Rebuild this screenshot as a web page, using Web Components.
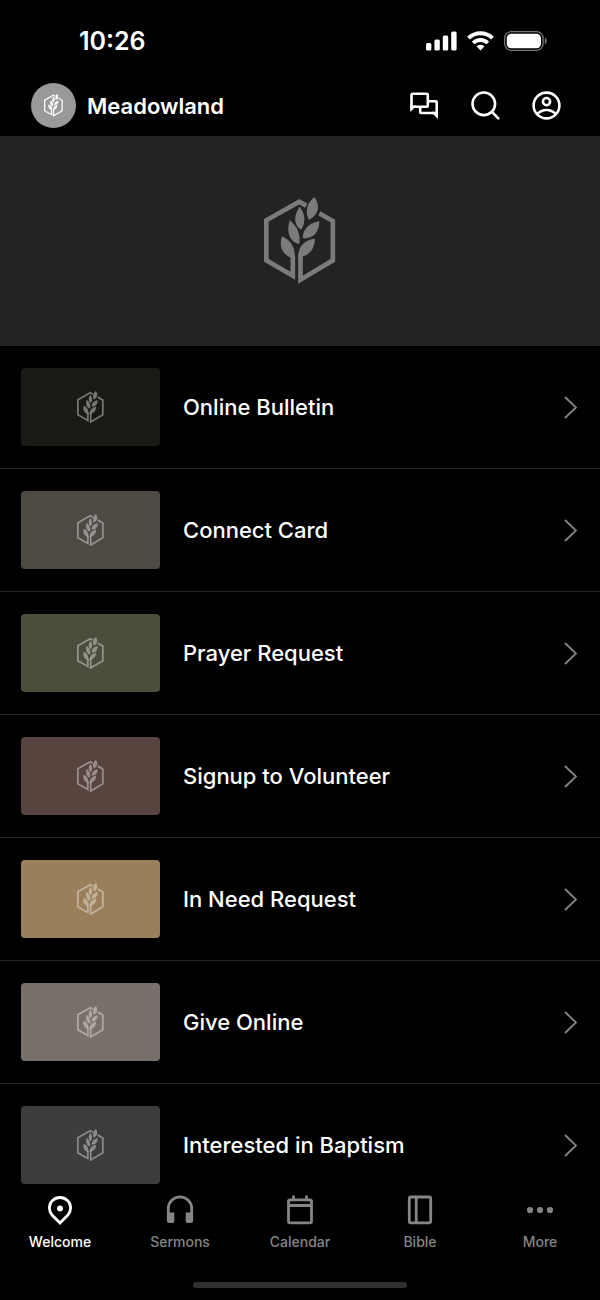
<!DOCTYPE html>
<html lang="en">
<head>
<meta charset="utf-8">
<meta name="viewport" content="width=device-width, initial-scale=1">
<title>Meadowland</title>
<style>
    body {
        margin: 0;
        background: #000;
        color: #fff;
        font-family: Inter, "Liberation Sans", sans-serif;
    }
</style>
</head>
<body>
<church-app>
    <status-bar slot="top" time="10:26"></status-bar>
    <app-header slot="top">Meadowland</app-header>
    <hero-banner></hero-banner>
    <link-row href="#bulletin" color="#191a15">Online Bulletin</link-row>
    <link-row href="#connect" color="#4d4a43">Connect Card</link-row>
    <link-row href="#prayer" color="#4c4d3d">Prayer Request</link-row>
    <link-row href="#volunteer" color="#58433f">Signup to Volunteer</link-row>
    <link-row href="#need" color="#9a7f5b">In Need Request</link-row>
    <link-row href="#give" color="#79706a">Give Online</link-row>
    <link-row href="#baptism" color="#3f3c3e">Interested in Baptism</link-row>
    <tab-bar slot="bottom">
        <tab-item href="#welcome" icon="pin" active>Welcome</tab-item>
        <tab-item href="#sermons" icon="headphones">Sermons</tab-item>
        <tab-item href="#calendar" icon="calendar">Calendar</tab-item>
        <tab-item href="#bible" icon="book">Bible</tab-item>
        <tab-item href="#more" icon="dots">More</tab-item>
    </tab-bar>
</church-app>

<script>
class ChurchApp extends HTMLElement {
    connectedCallback() {
        this.attachShadow({ mode: 'open' });
        this.shadowRoot.innerHTML = `
            <style>
                :host {
                    display: flex;
                    flex-direction: column;
                    height: 100vh;
                }
                main {
                    flex: 1;
                    min-height: 0;
                    overflow-y: auto;
                    scrollbar-width: none;
                }
            </style>
            <slot name="top"></slot>
            <main><slot></slot></main>
            <slot name="bottom"></slot>
        `;
    }
}
customElements.define('church-app', ChurchApp);

class StatusBar extends HTMLElement {
    connectedCallback() {
        this.attachShadow({ mode: 'open' });
        this.shadowRoot.innerHTML = `
            <style>
                :host {
                    display: flex;
                    justify-content: space-between;
                    align-items: center;
                    padding: 24px 53px 8px 79px;
                }
                .time {
                    font-size: 25px;
                    line-height: 34px;
                    font-weight: 600;
                }
                .icons {
                    display: flex;
                    align-items: center;
                    gap: 10px;
                }
                svg {
                    display: block;
                }
            </style>
            <span class="time">${this.getAttribute('time')}</span>
            <div class="icons">
                <svg width="31" height="20" viewBox="0 0 31 20" fill="#fff">
                    <rect x="0" y="12" width="5.4" height="7.5" rx="1.5"/>
                    <rect x="8.4" y="8.5" width="5.4" height="11" rx="1.5"/>
                    <rect x="16.8" y="4.5" width="5.4" height="15" rx="1.5"/>
                    <rect x="25.2" y="0.5" width="5.4" height="19" rx="1.5"/>
                </svg>
                <svg width="27" height="20" viewBox="0 0 27 20" fill="none" stroke="#fff" stroke-width="3.8">
                    <path d="M1.5 7.2a17 17 0 0 1 24 0"/>
                    <path d="M6.2 12a10.4 10.4 0 0 1 14.6 0"/>
                    <path d="M13.5 19.5l-4-4.2a5.8 5.8 0 0 1 8 0z" fill="#fff" stroke="none"/>
                </svg>
                <svg width="43" height="20" viewBox="0 0 43 20">
                    <rect x="0.7" y="0.7" width="38.4" height="18.6" rx="6.5" fill="none" stroke="#777" stroke-width="1.3"/>
                    <rect x="2.8" y="2.8" width="34.2" height="14.4" rx="4.5" fill="#fff"/>
                    <path d="M40.8 6.6q2 1 2 3.4t-2 3.4z" fill="#777"/>
                </svg>
            </div>
        `;
    }
}
customElements.define('status-bar', StatusBar);

// Hexagon with a wheat stalk, sized by the element around it
class WheatLogo extends HTMLElement {
    connectedCallback() {
        this.attachShadow({ mode: 'open' });
        this.shadowRoot.innerHTML = `
            <style>
                :host {
                    display: block;
                }
                svg {
                    display: block;
                    width: 100%;
                }
            </style>
            <svg viewBox="72 52 216 262" fill="currentColor">
                <g fill="none" stroke="currentColor" stroke-width="14">
                    <path d="M199 78L178 66L79 122V242L158.5 288V230"/>
                    <path d="M238 101L278.5 124V242L181.5 300V224"/>
                </g>
                <path d="M126 170C151 181 166 202 165 238C136 232 113 207 126 170z"/>
                <path d="M149 122C171 139 182 162 178 193C149 189 138 156 149 122z"/>
                <path d="M179 81C196 102 198 128 183 150C161 136 160 108 179 81z"/>
                <path d="M223 52C240 76 239 103 207 121C193 95 202 69 223 52z"/>
                <path d="M238 125C238 160 218 178 188 176C189 146 208 130 238 125z"/>
                <path d="M225 177C223 213 205 228 175 234C172 203 193 180 225 177z"/>
            </svg>
        `;
    }
}
customElements.define('wheat-logo', WheatLogo);

class AppHeader extends HTMLElement {
    connectedCallback() {
        this.attachShadow({ mode: 'open' });
        this.shadowRoot.innerHTML = `
            <style>
                :host {
                    display: flex;
                    justify-content: space-between;
                    align-items: center;
                    padding: 17px 39px 8px 31px;
                }
                .brand {
                    display: flex;
                    align-items: center;
                    gap: 11px;
                }
                .avatar {
                    display: grid;
                    place-items: center;
                    width: 45px;
                    height: 45px;
                    border-radius: 50%;
                    background: #999;
                }
                .avatar wheat-logo {
                    width: 19px;
                }
                h1 {
                    margin: 0;
                    font-size: 22px;
                    line-height: 28px;
                    font-weight: 600;
                }
                .actions {
                    display: flex;
                    gap: 32px;
                }
                button {
                    padding: 0;
                    border: 0;
                    background: none;
                    color: inherit;
                    cursor: pointer;
                }
                svg {
                    display: block;
                    fill: none;
                    stroke: currentColor;
                    stroke-width: 2.6;
                }
            </style>
            <div class="brand">
                <span class="avatar"><wheat-logo></wheat-logo></span>
                <h1><slot></slot></h1>
            </div>
            <div class="actions">
                <button type="button" aria-label="Messages">
                    <svg width="29" height="29" viewBox="0 0 29 29">
                        <path d="M1.5 17V4q0-1.2 1.2-1.2H16.6q1.2 0 1.2 1.2v10.6q0 1.2-1.2 1.2H4"/>
                        <path d="M0.2 14.5V21l4-4H6v-2.5z" fill="currentColor" stroke="none"/>
                        <path d="M18 10.2h7.5q1.2 0 1.2 1.2V23M25 22H11.400q-1.200 0-1.200-1.200V16"/>
                        <path d="M28 20.7V28l-4.7-4.7H22v-2.600z" fill="currentColor" stroke="none"/>
                    </svg>
                </button>
                <button type="button" aria-label="Search">
                    <svg width="29" height="29" viewBox="0 0 29 29" stroke-linecap="round">
                        <circle cx="12.8" cy="12.8" r="11.3"/>
                        <path d="M21 21l6.3 6.3"/>
                    </svg>
                </button>
                <button type="button" aria-label="Account">
                    <svg width="29" height="29" viewBox="0 0 29 29">
                        <circle cx="14.5" cy="14.5" r="12.9"/>
                        <circle cx="14.5" cy="10.6" r="3.6"/>
                        <path d="M5.200 23q4-4 9.300-4t9.300 4"/>
                    </svg>
                </button>
            </div>
        `;
    }
}
customElements.define('app-header', AppHeader);

class HeroBanner extends HTMLElement {
    connectedCallback() {
        this.attachShadow({ mode: 'open' });
        this.shadowRoot.innerHTML = `
            <style>
                :host {
                    display: grid;
                    place-items: center;
                    aspect-ratio: 20 / 7;
                    background: #232323;
                    color: #7b7b7b;
                }
                wheat-logo {
                    width: 72px;
                }
            </style>
            <wheat-logo></wheat-logo>
        `;
    }
}
customElements.define('hero-banner', HeroBanner);

class LinkRow extends HTMLElement {
    connectedCallback() {
        this.attachShadow({ mode: 'open' });
        this.shadowRoot.innerHTML = `
            <style>
                :host {
                    display: block;
                    border-bottom: 1px solid #262626;
                }
                a {
                    display: flex;
                    align-items: center;
                    gap: 23px;
                    padding: 22px 23px 22px 21px;
                    color: inherit;
                    text-decoration: none;
                }
                .thumb {
                    display: grid;
                    place-items: center;
                    width: 139px;
                    height: 78px;
                    border-radius: 4px;
                    background: ${this.getAttribute('color')};
                    color: rgba(255, 255, 255, 0.4);
                }
                .thumb wheat-logo {
                    width: 27px;
                }
                .label {
                    flex: 1;
                    font-size: 22px;
                    line-height: 28px;
                    font-weight: 500;
                }
                .chevron {
                    fill: none;
                    stroke: #858585;
                    stroke-width: 1.8;
                }
            </style>
            <a href="${this.getAttribute('href')}">
                <span class="thumb"><wheat-logo></wheat-logo></span>
                <span class="label"><slot></slot></span>
                <svg class="chevron" width="13" height="24" viewBox="0 0 13 24">
                    <path d="M1 2L12 12.5L1 23"/>
                </svg>
            </a>
        `;
    }
}
customElements.define('link-row', LinkRow);

class TabBar extends HTMLElement {
    connectedCallback() {
        this.attachShadow({ mode: 'open' });
        this.shadowRoot.innerHTML = `
            <style>
                :host {
                    display: block;
                    padding-bottom: 12px;
                    background: #000;
                }
                nav {
                    display: grid;
                    grid-template-columns: repeat(5, 1fr);
                    padding: 11px 0 30px;
                }
                .home {
                    width: 214px;
                    height: 6px;
                    margin: 0 auto;
                    border-radius: 3px;
                    background: #303030;
                }
            </style>
            <nav><slot></slot></nav>
            <div class="home"></div>
        `;
    }
}
customElements.define('tab-bar', TabBar);

const TAB_ICONS = {
    pin: `
        <path d="M15 28L6.8 19.7A11 11 0 0 1 4.4 12.8a10.6 10.3 0 0 1 21.2 0a11 11 0 0 1-2.4 6.9z"/>
        <circle cx="15" cy="13.5" r="3" fill="currentColor" stroke="none"/>`,
    headphones: `
        <path d="M3.3 26V13.5a11.7 11.7 0 0 1 23.4 0v12.5"/>
        <path d="M2 17.5h7.3v8.5q0 2-2 2H4q-2 0-2-2zM28 17.5h-7.3v8.5q0 2 2 2H26q2 0 2-2z" fill="currentColor" stroke="none"/>`,
    calendar: `
        <rect x="3.5" y="4.8" width="23" height="23" rx="1.5"/>
        <path d="M3.5 10.5h23M8.5 0.5v4M21.5 0.5v4"/>`,
    book: `
        <rect x="4.3" y="2" width="21.4" height="25.8" rx="1.5"/>
        <path d="M11.2 2v25.8"/>`,
    dots: `
        <g fill="currentColor" stroke="none">
            <circle cx="5" cy="15" r="3.1"/>
            <circle cx="15" cy="15" r="3.1"/>
            <circle cx="25" cy="15" r="3.1"/>
        </g>`
};

class TabItem extends HTMLElement {
    connectedCallback() {
        this.attachShadow({ mode: 'open' });
        this.shadowRoot.innerHTML = `
            <style>
                :host {
                    display: block;
                    color: #858585;
                }
                :host([active]) {
                    color: #fff;
                }
                a {
                    display: flex;
                    flex-direction: column;
                    align-items: center;
                    gap: 7px;
                    color: inherit;
                    text-decoration: none;
                    font-size: 14px;
                    line-height: 20px;
                    font-weight: 500;
                }
                svg {
                    display: block;
                    fill: none;
                    stroke: currentColor;
                    stroke-width: 2.8;
                }
            </style>
            <a href="${this.getAttribute('href')}">
                <svg width="30" height="30" viewBox="0 0 30 30">${TAB_ICONS[this.getAttribute('icon')]}</svg>
                <slot></slot>
            </a>
        `;
    }
}
customElements.define('tab-item', TabItem);
</script>
</body>
</html>
